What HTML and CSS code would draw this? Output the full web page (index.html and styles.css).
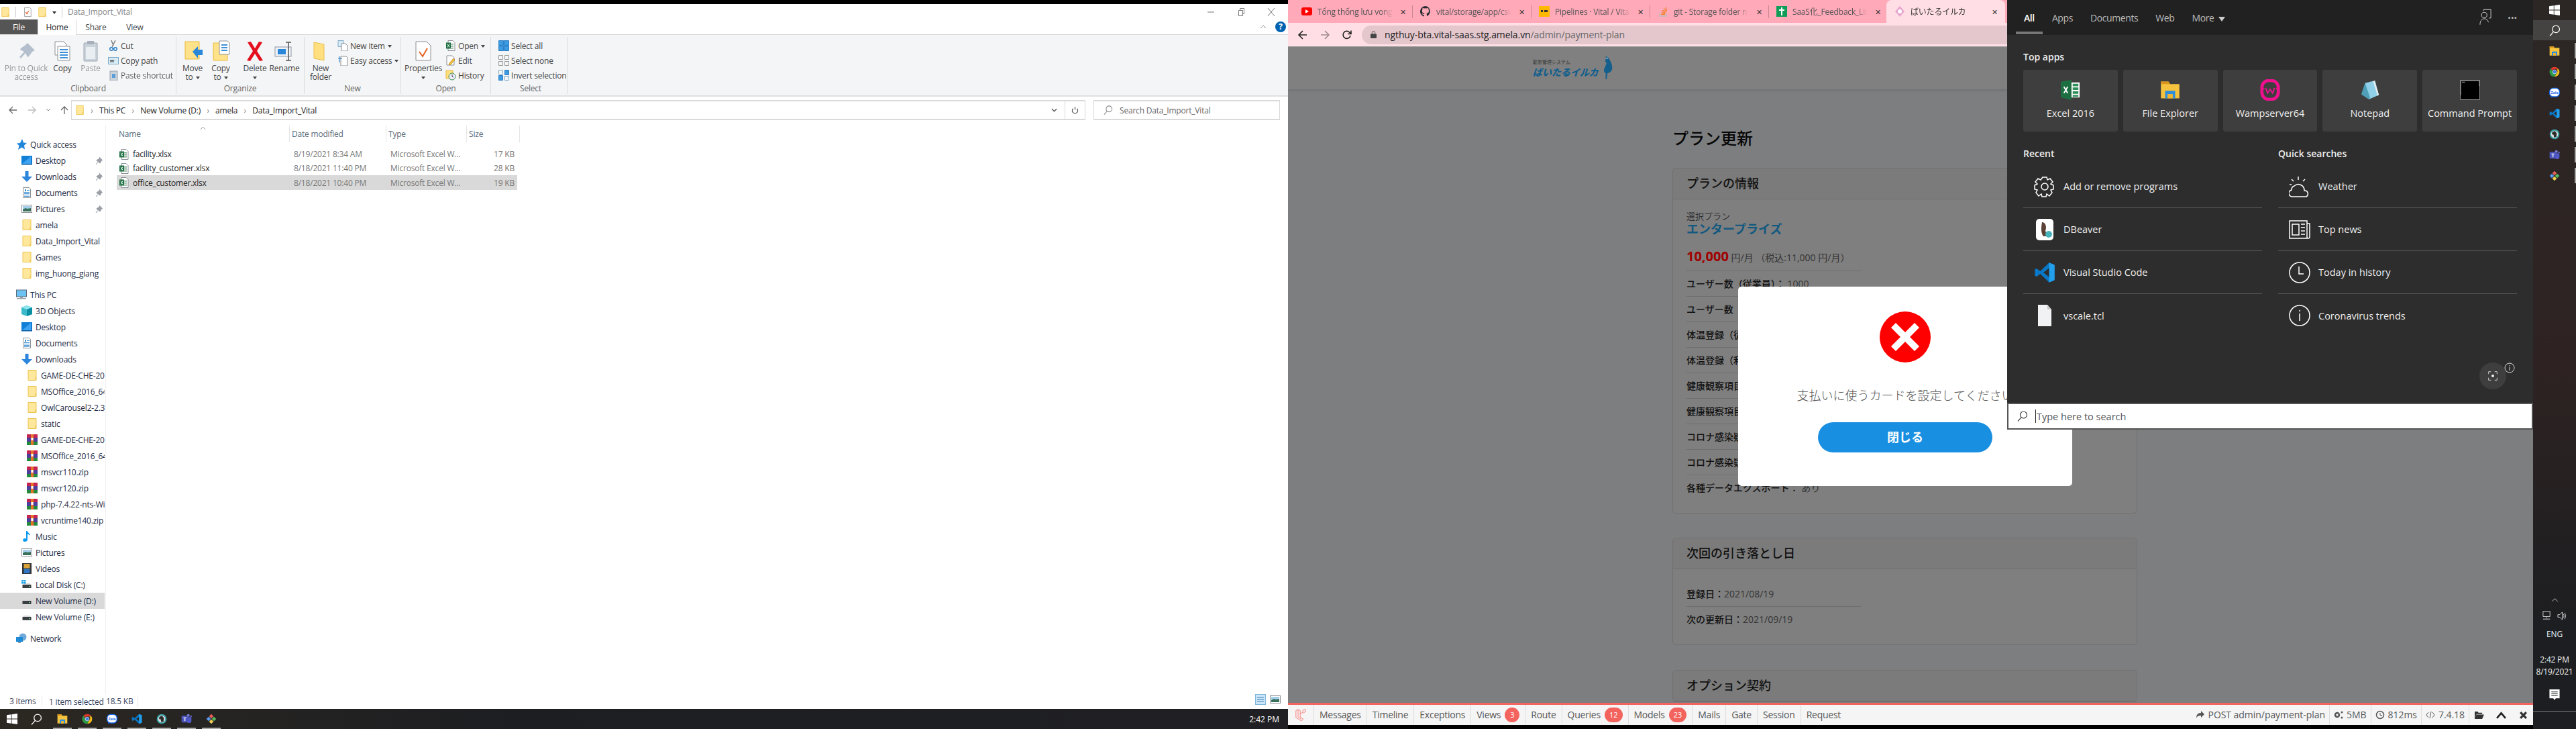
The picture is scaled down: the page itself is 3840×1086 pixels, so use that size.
FILE: index.html
```html
<!DOCTYPE html>
<html lang="en">
<head>
  <meta charset="UTF-8" />
  <title>Desktop</title>
  <link rel="stylesheet" href="styles.css">
</head>
<body>

<svg class="defs" width="0" height="0">
  <defs>
    <symbol id="folder" viewBox="0 0 16 16"><path d="M2 .5h12v15H2z" fill="#ffe89c" stroke="#eec24f"/><path d="M12 15.5v-4h2v4z" fill="#f3cc5c"/></symbol>
    <symbol id="xlsx" viewBox="0 0 16 16"><path d="M4 .5h7l3 3v12H4z" fill="#fff" stroke="#8a8f94"/><path d="M8 5h4v1.5H8zM8 8h4v1.5H8zM8 11h4v1.5H8z" fill="#6c9b7d"/><rect x="1" y="3.5" width="7" height="9" fill="#1d6f42"/><path d="M3 5.5l3 5M6 5.5l-3 5" stroke="#fff"/></symbol>
    <symbol id="rar" viewBox="0 0 16 16"><rect y="0" width="16" height="5" fill="#c4244f"/><rect y="5" width="16" height="6" fill="#4d3f9d"/><rect y="11" width="16" height="5" fill="#23893c"/><rect x="6" width="4" height="16" fill="#e8742a"/><rect x="6.5" y="5" width="3" height="4" fill="#fff"/></symbol>
    <symbol id="pin" viewBox="0 0 16 16"><path d="M9 1l6 6-2 1-2 4-1.500 1L7 10l-4 5-1-1 4-4-3-2.500L4 6l4-2z" fill="#9aa0a6"/></symbol>
    <symbol id="star" viewBox="0 0 16 16"><path d="M9 0l2 5.500 5 .5-4 3.500 1 6-4.500-3L3 16l1.500-6L1 6.500l5-.5z" fill="#1f86d9"/></symbol>
    <symbol id="desktop" viewBox="0 0 16 16"><rect y="1" width="16" height="13" fill="#0f7fd8"/><path d="M1 13L14 2v11z" fill="#3fa2ef"/><rect y="13" width="16" height="1.500" fill="#0a5da3"/></symbol>
    <symbol id="down" viewBox="0 0 16 16"><path d="M5.500 0h5v8H16l-8 8-8-8h5.500z" fill="#2c86de"/></symbol>
    <symbol id="docs" viewBox="0 0 16 16"><path d="M2.500.5h9l2 2v13h-11z" fill="#fff" stroke="#8b8f94"/><path d="M5 3h2v3H5zM8 4h4v1H8zM4 7h8v1H4zM4 9h8v1H4zM4 11h8v1H4zM4 13h8v1H4z" fill="#3d8fd4"/></symbol>
    <symbol id="pics" viewBox="0 0 16 16"><rect x=".5" y="2.500" width="15" height="11" fill="#fff" stroke="#8b8f94"/><rect x="2" y="4" width="12" height="8" fill="#a4d0ee"/><path d="M2 9l4-2 3 1 5-1v5H2z" fill="#38705a"/></symbol>
    <symbol id="pc" viewBox="0 0 16 16"><rect x=".5" y="1" width="15" height="10" fill="#6cc3f3" stroke="#5a6a78"/><rect x="6" y="11" width="4" height="2" fill="#9aa2a8"/><rect x="1" y="13" width="14" height="1.500" fill="#9aa2a8"/></symbol>
    <symbol id="cube" viewBox="0 0 16 16"><path d="M8 0l8 3v10l-8 3-8-3V3z" fill="#39b9c9"/><path d="M8 6L0 3l8-3 8 3z" fill="#8fe4ee"/><path d="M8 6v10l8-3V3z" fill="#0c8ea3"/></symbol>
    <symbol id="music" viewBox="0 0 16 16"><path d="M7 0h2c0 3 4 3.500 4 7-1-1.500-2.500-2-4-2v8c0 2-2 3-4 3s-3-1-3-2.200S3.500 11 5 11c.8 0 1.500.2 2 .5z" fill="#0d9af0"/></symbol>
    <symbol id="video" viewBox="0 0 16 16"><rect x="1" width="14" height="16" fill="#333"/><rect x="3.500" y="1" width="9" height="6.500" fill="#d9a13a"/><rect x="3.500" y="8.500" width="9" height="6.500" fill="#2f77c4"/></symbol>
    <symbol id="disk" viewBox="0 0 16 16"><path d="M2 8l1-2h10l1 2z" fill="#d6d8da"/><rect x="1.500" y="8" width="13" height="5" fill="#3a3f44"/><rect x="11" y="10" width="1.500" height="1.500" fill="#6fe06f"/></symbol>
    <symbol id="diskc" viewBox="0 0 16 16"><use href="#disk"/><path d="M0 1h3v2.500H0zM3.500 1h3v2.500h-3zM0 4h3v2.500H0zM3.500 4h3v2.500h-3z" fill="#1aa3e8"/></symbol>
    <symbol id="net" viewBox="0 0 16 16"><circle cx="10" cy="6" r="5.500" fill="#6fa9d9"/><rect y="6" width="10" height="7" fill="#1c8ad6"/><rect x="3" y="13" width="4" height="2" fill="#8a9aa6"/></symbol>
    <symbol id="win" viewBox="0 0 16 16"><path d="M0 2.300l6.800-1v6.300H0zM7.600 1.200L16 0v7.600H7.600zM0 8.400h6.800v6.300l-6.800-1zM7.600 8.400H16V16l-8.400-1.200z" fill="#fff"/></symbol>
    <symbol id="lens" viewBox="0 0 16 16"><circle cx="9.500" cy="6" r="5" fill="none" stroke="currentColor" stroke-width="1.200"/><path d="M6 9.800L1 15.500" stroke="currentColor" stroke-width="1.200"/></symbol>
    <symbol id="explorer" viewBox="0 0 24 24"><path d="M1 2h9l2 3h11v17H1z" fill="#f5c33e"/><path d="M1 2h9l2 3H1z" fill="#d9951e"/><path d="M6 13h12v9h-3v-5H9v5H6z" fill="#2f8fdc"/><rect x="9" y="17" width="6" height="5" fill="#f2b632"/></symbol>
    <symbol id="chrome" viewBox="0 0 24 24"><path d="M12 1a11 11 0 0 1 9.500 5.500H12A5.500 5.500 0 0 0 7 9.700L3.700 4.500A11 11 0 0 1 12 1z" fill="#d93a2c"/><path d="M21.500 6.500A11 11 0 0 1 12 23l4.700-8.200a5.500 5.500 0 0 0 .1-8.300z" fill="#f2bd1d"/><path d="M12 23A11 11 0 0 1 3.700 4.500L7.700 12a5.500 5.500 0 0 0 9 2.800z" fill="#2e9a47"/><circle cx="12" cy="12" r="4.300" fill="#3f7ee0" stroke="#fff"/></symbol>
    <symbol id="zalo" viewBox="0 0 24 24"><rect x="1" y="2" width="22" height="19" rx="8" fill="#fff" stroke="#1667f0" stroke-width="2"/><path d="M4 20l-1 3 5-2z" fill="#1667f0"/><text x="12" y="14.500" font-size="8" font-weight="700" font-family="Open Sans" text-anchor="middle" fill="#1667f0">Zalo</text></symbol>
    <symbol id="vscode" viewBox="0 0 24 24"><path d="M17 1L7 10.500 3 7.500 1 8.500v7l2 1 4-3L17 23l6-2.500v-17zM17 7v10l-6.500-5z" fill="#0a78c8" fill-rule="evenodd"/><path d="M17 1l6 2.500v17L17 23V17V7z" fill="#22a0ec"/></symbol>
    <symbol id="roundapp" viewBox="0 0 24 24"><circle cx="12" cy="12" r="11" fill="#3aa3a8"/><circle cx="12" cy="12" r="8" fill="#ddd"/><path d="M7 7l6-2 4 5-1 8-5 1-1-6-4-1z" fill="#2d2d2d"/></symbol>
    <symbol id="teams" viewBox="0 0 24 24"><circle cx="16" cy="4" r="3" fill="#7b83d6"/><circle cx="22" cy="6" r="2" fill="#5f67bc"/><path d="M13 8h10v8a5 5 0 0 1-5 5h-2a5 5 0 0 1-3-2z" fill="#5059c9"/><rect x="1" y="5" width="15" height="15" rx="1.500" fill="#4b53bc"/><path d="M5 8.500h7v1.800H9.500V17h-2v-6.700H5z" fill="#fff"/></symbol>
    <symbol id="kraken" viewBox="0 0 24 24"><path d="M12 1l5 5-5 5-5-5z" fill="#e8605a"/><path d="M6 7l5 5-5 5-5-5z" fill="#5b9bf0"/><path d="M18 7l5 5-5 5-5-5z" fill="#57b85d"/><path d="M12 13l5 5-5 5-5-5z" fill="#f2cf52"/></symbol>
    <symbol id="excel" viewBox="0 0 32 32"><path d="M1 3l17-3v32L1 28z" fill="#1d6f42"/><path d="M18 4h13v24H18z" fill="#fff"/><path d="M20 6h9v4h-9zM20 12h9v4h-9zM20 18h9v4h-9zM20 24h9v3h-9z" fill="#2f8f5b"/><path d="M6 11l6 10M12 11L6 21" stroke="#fff" stroke-width="2"/></symbol>
  </defs>
</svg>

<div class="desktop">

  <!-- explorer window -->
  <section class="explorer">
    <div class="titlebar">
      <div class="qa">
        <svg class="qa-ico"><use href="#folder"/></svg>
        <i class="qa-sep"></i>
        <svg class="qa-ico" viewBox="0 0 16 16"><path d="M3 .5h9l2 2v13H3z" fill="#fff" stroke="#999"/><path d="M5 8l2 3 3-5" fill="none" stroke="#e65a1e" stroke-width="1.500"/></svg>
        <svg class="qa-ico"><use href="#folder"/></svg>
        <span class="qa-drop"></span>
        <i class="qa-sep"></i>
        <span class="qa-title">Data_Import_Vital</span>
      </div>
      <div class="wincontrols">
        <svg viewBox="0 0 12 12"><path d="M1 6h10" stroke="#777"/></svg>
        <svg viewBox="0 0 12 12"><path d="M2.500 3.500h6v8h-6zM4.500 3.500V.5h6v8h-2" fill="none" stroke="#777"/></svg>
        <svg viewBox="0 0 12 12"><path d="M1 0l10 12M11 0L1 12" stroke="#777"/></svg>
      </div>
    </div>

    <div class="tabs">
      <span class="tab-file">File</span>
      <span class="tab-home">Home</span>
      <span class="tab-other tab-share">Share</span>
      <span class="tab-other">View</span>
      <span class="tabs-end">
        <svg class="collapse" viewBox="0 0 10 6"><path d="M1 5l4-4 4 4" fill="none" stroke="#888"/></svg>
        <span class="help">?</span>
      </span>
    </div>

    <div class="ribbon">
      <div class="group g-clip">
        <div class="tools">
          <div class="big w70 dim">
            <svg class="big-ico" viewBox="0 0 32 32"><path d="M18 4l11 11-4 2-5 7-2 1-3-6-7 8-2-2 7-8-6-3 1-2 7-5z" fill="#a9b6c6"/></svg>
            <span>Pin to Quick<br>access</span>
          </div>
          <div class="big w38">
            <svg class="big-ico" viewBox="0 0 32 32"><path d="M5 2h13l4 4v16H5z" fill="#fff" stroke="#8b8f94"/><path d="M9 9h18v21H9z" fill="#fff" stroke="#8b8f94"/><path d="M12 13h12v2H12zM12 17h12v2H12zM12 21h12v2H12zM12 25h12v2H12z" fill="#3e8fd6"/></svg>
            <span>Copy</span>
          </div>
          <div class="big w46 dim">
            <svg class="big-ico" viewBox="0 0 32 32"><rect x="6" y="4" width="20" height="27" rx="1" fill="#c3ccd6" stroke="#8b96a3"/><rect x="11" y="1" width="10" height="5" fill="#9aa4b0"/><path d="M9 10h14v18H9z" fill="#e8edf2"/></svg>
            <span>Paste</span>
          </div>
          <div class="smalls">
            <div class="small"><svg viewBox="0 0 16 16"><path d="M5 0l3 8M11 0L6 10" stroke="#777" stroke-width="1.300"/><circle cx="5" cy="13" r="2.300" fill="none" stroke="#2a7fc9" stroke-width="1.500"/><circle cx="11" cy="13" r="2.300" fill="none" stroke="#2a7fc9" stroke-width="1.500"/></svg><span>Cut</span></div>
            <div class="small"><svg viewBox="0 0 16 16"><rect x=".5" y="3.500" width="15" height="10" fill="#d8ecf8" stroke="#7fa9c6"/><path d="M3 7l1.500 4L6 7l1.500 4L9 7" fill="none" stroke="#444"/></svg><span>Copy path</span></div>
            <div class="small dim"><svg viewBox="0 0 16 16"><rect x="3" y="2" width="11" height="14" fill="#c3ccd6" stroke="#8b96a3"/><path d="M6 6h5v6H6z" fill="#3e8fd6"/></svg><span>Paste shortcut</span></div>
          </div>
        </div>
        <div class="group-name">Clipboard</div>
      </div>

      <div class="group g-org">
        <div class="tools">
          <div class="big w42">
            <svg class="big-ico" viewBox="0 0 32 32"><path d="M5 2h21v26H5z" fill="#ffe28a" stroke="#e8b93c"/><path d="M16 17l8-8v5h7v8h-7v5z" fill="#2a86d9"/></svg>
            <span>Move<br>to<i class="caret"></i></span>
          </div>
          <div class="big w42">
            <svg class="big-ico" viewBox="0 0 32 32"><path d="M5 4h21v26H5z" fill="#ffe28a" stroke="#e8b93c"/><path d="M14 1h12l3 3v17H14z" fill="#fff" stroke="#8b8f94"/><path d="M17 6h9v2h-9zM17 10h9v2h-9zM17 14h9v2h-9z" fill="#3e8fd6"/></svg>
            <span>Copy<br>to<i class="caret"></i></span>
          </div>
          <i class="tool-sep"></i>
          <div class="big w44">
            <svg class="big-ico" viewBox="0 0 32 32"><path d="M5 3l5-1 6 10 6-10 5 1-8 13 9 14-5 1-7-11-7 11-5-1 9-14z" fill="#e5101f"/></svg>
            <span>Delete<br><i class="caret solo"></i></span>
          </div>
          <div class="big w44">
            <svg class="big-ico" viewBox="0 0 32 32"><rect x="2" y="10" width="24" height="14" fill="#eef3f8" stroke="#8b96a3"/><rect x="6" y="13" width="12" height="8" fill="#2a86d9"/><path d="M18 3h8M18 30h8M22 3v27" stroke="#555" stroke-width="1.500"/></svg>
            <span>Rename</span>
          </div>
        </div>
        <div class="group-name">Organize</div>
      </div>

      <div class="group g-new">
        <div class="tools">
          <div class="big w42">
            <svg class="big-ico" viewBox="0 0 32 32"><path d="M6 3l15 3v24L6 27z" fill="#ffdf80" stroke="#ecc04f"/></svg>
            <span>New<br>folder</span>
          </div>
          <div class="smalls wide-icon">
            <div class="small"><svg viewBox="0 0 16 16"><path d="M1 .5h8v9H1z" fill="#d8ecf8" stroke="#7fa9c6"/><path d="M6 5h6l3 3v8H6z" fill="#fff" stroke="#8b8f94"/></svg><span>New item<i class="caret"></i></span></div>
            <div class="small"><svg viewBox="0 0 16 16"><path d="M5 2h8l2 2v12H5z" fill="#fff" stroke="#8b8f94"/><path d="M1 5h6M3 2v9" stroke="#2a7fc9"/></svg><span>Easy access<i class="caret"></i></span></div>
          </div>
        </div>
        <div class="group-name">New</div>
      </div>

      <div class="group g-open">
        <div class="tools">
          <div class="big w60">
            <svg class="big-ico" viewBox="0 0 32 32"><path d="M5 2h16l6 6v22H5z" fill="#fff" stroke="#8b8f94"/><path d="M10 17l5 7 7-12" fill="none" stroke="#e8601e" stroke-width="2"/></svg>
            <span>Properties<br><i class="caret solo"></i></span>
          </div>
          <div class="smalls">
            <div class="small"><svg viewBox="0 0 16 16"><use href="#xlsx"/></svg><span>Open<i class="caret"></i></span></div>
            <div class="small"><svg viewBox="0 0 16 16"><path d="M2 1h8l3 3v11H2z" fill="#fff" stroke="#8b8f94"/><path d="M12 5l2 2-6 7-3 1 1-3z" fill="#f2c33e" stroke="#c8962a"/></svg><span>Edit</span></div>
            <div class="small"><svg viewBox="0 0 16 16"><path d="M1 1h10v12H1z" fill="#ffdf80" stroke="#e8b93c"/><circle cx="10" cy="10" r="5" fill="#eef" stroke="#3c8a4a"/><path d="M10 7v3l2 1" stroke="#333" fill="none"/></svg><span>History</span></div>
          </div>
        </div>
        <div class="group-name">Open</div>
      </div>

      <div class="group g-select">
        <div class="tools">
          <div class="smalls">
            <div class="small"><svg viewBox="0 0 16 16"><path d="M.5.5h7v7h-7zM8.500.5h7v7h-7zM.5 8.500h7v7h-7zM8.500 8.500h7v7h-7z" fill="#3e9be0" stroke="#2a7fc9"/></svg><span>Select all</span></div>
            <div class="small"><svg viewBox="0 0 16 16"><path d="M.5.5h6v6h-6zM9.500.5h6v6h-6zM.5 9.500h6v6h-6zM9.500 9.500h6v6h-6z" fill="none" stroke="#999"/></svg><span>Select none</span></div>
            <div class="small"><svg viewBox="0 0 16 16"><path d="M9.500.5h6v7h-6zM.5 8.500h6v7h-6z" fill="#3e9be0" stroke="#2a7fc9"/><path d="M.5.5h6v6h-6zM9.500 9.500h6v6h-6z" fill="none" stroke="#7fa9c6"/></svg><span>Invert selection</span></div>
          </div>
        </div>
        <div class="group-name">Select</div>
      </div>
    </div>

    <div class="addressrow">
      <div class="navbtns">
        <svg viewBox="0 0 14 14"><path d="M13 7H2M7 2L2 7l5 5" fill="none" stroke="#666" stroke-width="1.300"/></svg>
        <svg viewBox="0 0 14 14"><path d="M1 7h11M7 2l5 5-5 5" fill="none" stroke="#bbb" stroke-width="1.300"/></svg>
        <svg class="nav-small" viewBox="0 0 8 6"><path d="M1 1l3 3 3-3" fill="none" stroke="#888"/></svg>
        <svg viewBox="0 0 14 14"><path d="M7 13V2M2 7l5-5 5 5" fill="none" stroke="#666" stroke-width="1.300"/></svg>
      </div>
      <div class="addressbox">
        <svg class="path-ico"><use href="#folder"/></svg>
        <span class="crumb-sep">›</span><span>This PC</span>
        <span class="crumb-sep">›</span><span>New Volume (D:)</span>
        <span class="crumb-sep">›</span><span>amela</span>
        <span class="crumb-sep">›</span><span>Data_Import_Vital</span>
        <span class="addr-end">
          <svg class="addr-drop" viewBox="0 0 10 6"><path d="M1 1l4 4 4-4" fill="none" stroke="#555" stroke-width="1.500"/></svg>
          <span class="addr-refresh"><svg viewBox="0 0 12 14"><path d="M3 4a4.500 4.500 0 1 0 6 0M6 1v5" fill="none" stroke="#555" stroke-width="1.300"/></svg></span>
        </span>
      </div>
      <div class="searchbox">
        <svg class="searchbox-ico"><use href="#lens"/></svg>
        <span>Search Data_Import_Vital</span>
      </div>
    </div>

    <div class="explorer-body">
      <nav class="navpane">
        <div class="nav-row l1"><svg><use href="#star"/></svg><span>Quick access</span></div>
        <div class="nav-row l2"><svg><use href="#desktop"/></svg><span>Desktop</span><svg class="pinned"><use href="#pin"/></svg></div>
        <div class="nav-row l2"><svg><use href="#down"/></svg><span>Downloads</span><svg class="pinned"><use href="#pin"/></svg></div>
        <div class="nav-row l2"><svg><use href="#docs"/></svg><span>Documents</span><svg class="pinned"><use href="#pin"/></svg></div>
        <div class="nav-row l2"><svg><use href="#pics"/></svg><span>Pictures</span><svg class="pinned"><use href="#pin"/></svg></div>
        <div class="nav-row l2"><svg><use href="#folder"/></svg><span>amela</span></div>
        <div class="nav-row l2"><svg><use href="#folder"/></svg><span>Data_Import_Vital</span></div>
        <div class="nav-row l2"><svg><use href="#folder"/></svg><span>Games</span></div>
        <div class="nav-row l2"><svg><use href="#folder"/></svg><span>img_huong_giang</span></div>

        <div class="nav-row l1 section"><svg><use href="#pc"/></svg><span>This PC</span></div>
        <div class="nav-row l2"><svg><use href="#cube"/></svg><span>3D Objects</span></div>
        <div class="nav-row l2"><svg><use href="#desktop"/></svg><span>Desktop</span></div>
        <div class="nav-row l2"><svg><use href="#docs"/></svg><span>Documents</span></div>
        <div class="nav-row l2"><svg><use href="#down"/></svg><span>Downloads</span></div>
        <div class="nav-row l3"><svg><use href="#folder"/></svg><span>GAME-DE-CHE-20</span></div>
        <div class="nav-row l3"><svg><use href="#folder"/></svg><span>MSOffice_2016_64</span></div>
        <div class="nav-row l3"><svg><use href="#folder"/></svg><span>OwlCarousel2-2.3.</span></div>
        <div class="nav-row l3"><svg><use href="#folder"/></svg><span>static</span></div>
        <div class="nav-row l3"><svg><use href="#rar"/></svg><span>GAME-DE-CHE-20</span></div>
        <div class="nav-row l3"><svg><use href="#rar"/></svg><span>MSOffice_2016_64</span></div>
        <div class="nav-row l3"><svg><use href="#rar"/></svg><span>msvcr110.zip</span></div>
        <div class="nav-row l3"><svg><use href="#rar"/></svg><span>msvcr120.zip</span></div>
        <div class="nav-row l3"><svg><use href="#rar"/></svg><span>php-7.4.22-nts-Wi</span></div>
        <div class="nav-row l3"><svg><use href="#rar"/></svg><span>vcruntime140.zip</span></div>
        <div class="nav-row l2"><svg><use href="#music"/></svg><span>Music</span></div>
        <div class="nav-row l2"><svg><use href="#pics"/></svg><span>Pictures</span></div>
        <div class="nav-row l2"><svg><use href="#video"/></svg><span>Videos</span></div>
        <div class="nav-row l2"><svg><use href="#diskc"/></svg><span>Local Disk (C:)</span></div>
        <div class="nav-row l2 selected"><svg><use href="#disk"/></svg><span>New Volume (D:)</span></div>
        <div class="nav-row l2"><svg><use href="#disk"/></svg><span>New Volume (E:)</span></div>

        <div class="nav-row l1 section"><svg><use href="#net"/></svg><span>Network</span></div>
      </nav>

      <div class="filepane">
        <div class="file-head">
          <span class="col-name">Name<svg class="sort" viewBox="0 0 10 6"><path d="M1 5l4-4 4 4" fill="none" stroke="#888"/></svg></span>
          <span>Date modified</span>
          <span>Type</span>
          <span>Size</span>
        </div>
        <div class="file-row"><span class="col-name"><svg><use href="#xlsx"/></svg><b>facility.xlsx</b></span><span>8/19/2021 8:34 AM</span><span>Microsoft Excel W...</span><span class="size">17 KB</span></div>
        <div class="file-row"><span class="col-name"><svg><use href="#xlsx"/></svg><b>facility_customer.xlsx</b></span><span>8/18/2021 11:40 PM</span><span>Microsoft Excel W...</span><span class="size">28 KB</span></div>
        <div class="file-row selected"><span class="col-name"><svg><use href="#xlsx"/></svg><b>office_customer.xlsx</b></span><span>8/18/2021 10:40 PM</span><span>Microsoft Excel W...</span><span class="size">19 KB</span></div>
      </div>
    </div>

    <div class="statusbar">
      <span class="st-items">3 items</span>
      <span class="st-sel">1 item selected</span>
      <span class="st-size">18.5 KB</span>
      <span class="views">
        <svg viewBox="0 0 16 16"><rect x=".5" y=".5" width="15" height="15" fill="#cde6f7" stroke="#7fb6dc"/><path d="M3 5h10M3 8h10M3 11h10" stroke="#357fb8"/></svg>
        <svg viewBox="0 0 16 16"><use href="#pics"/></svg>
      </span>
    </div>
  </section>

  <!-- left taskbar -->
  <footer class="taskbar">
    <span class="task-start"><svg><use href="#win"/></svg></span>
    <span class="task-search"><svg class="task-lens"><use href="#lens"/></svg></span>
    <span class="task-app first"><svg><use href="#explorer"/></svg></span>
    <span class="task-app"><svg><use href="#chrome"/></svg></span>
    <span class="task-app"><svg><use href="#zalo"/></svg></span>
    <span class="task-app"><svg><use href="#vscode"/></svg></span>
    <span class="task-app"><svg><use href="#roundapp"/></svg></span>
    <span class="task-app"><svg><use href="#teams"/></svg></span>
    <span class="task-app"><svg><use href="#kraken"/></svg></span>
    <span class="task-time">2:42 PM</span>
  </footer>

  <!-- browser -->
  <section class="browser">
    <div class="chrome-tabs">
      <div class="ctab sep"><svg class="fav" viewBox="0 0 16 16"><rect y="2" width="16" height="12" rx="3" fill="#f00"/><path d="M6 5l5 3-5 3z" fill="#fff"/></svg><span class="ctab-title">Tổng thống lưu vong</span><span class="ctab-x">✕</span></div>
      <div class="ctab sep"><svg class="fav" viewBox="0 0 16 16"><path d="M8 0a8 8 0 0 0-2.500 15.600c.4 0 .5-.2.500-.4v-2c-2.200.5-2.700-1-2.700-1-.4-.9-.9-1.200-.9-1.200-.7-.5.100-.5.100-.5.800.1 1.200.8 1.200.8.700 1.200 1.900.9 2.300.7.100-.5.300-.9.500-1.100-1.800-.2-3.700-.9-3.700-4 0-.9.300-1.600.8-2.100-.1-.2-.4-1 .1-2.100 0 0 .7-.2 2.200.8a7.600 7.600 0 0 1 4 0c1.500-1 2.200-.8 2.200-.8.400 1.100.2 1.900.1 2.100.5.600.8 1.300.8 2.100 0 3.100-1.900 3.700-3.700 3.900.3.300.6.800.6 1.500v2.200c0 .2.100.5.600.4A8 8 0 0 0 8 0z" fill="#24292e"/></svg><span class="ctab-title">vital/storage/app/csv</span><span class="ctab-x">✕</span></div>
      <div class="ctab sep"><svg class="fav" viewBox="0 0 16 16"><rect width="16" height="16" fill="#ffb800"/><rect x="3" y="6" width="3" height="3" fill="#333"/><rect x="8" y="6" width="5" height="3" fill="#333"/></svg><span class="ctab-title">Pipelines · Vital / Vita</span><span class="ctab-x">✕</span></div>
      <div class="ctab sep"><svg class="fav" viewBox="0 0 16 16"><path d="M3 10v5h10v-5" fill="none" stroke="#bcbbbb" stroke-width="1.500"/><path d="M5 12.500h6M5.300 10.500l5.800.6M6 8.500l5.500 1.500M7.300 6l4.700 3M9.500 3.500l3.300 4.500M12 1.500l1.500 5.500" stroke="#f48024" stroke-width="1.200"/></svg><span class="ctab-title">git - Storage folder n</span><span class="ctab-x">✕</span></div>
      <div class="ctab"><svg class="fav" viewBox="0 0 16 16"><rect width="16" height="16" fill="#0f9d58"/><path d="M7 2h2v3h3v2H9v7H7V7H4V5h3z" fill="#fff"/></svg><span class="ctab-title">SaaS化_Feedback_Lis</span><span class="ctab-x">✕</span></div>
      <div class="ctab active"><svg class="fav" viewBox="0 0 16 16"><path d="M8 0l7 8-7 8-7-8z" fill="#e8a6d0"/><circle cx="8" cy="8" r="3" fill="#fff"/></svg><span class="ctab-title">ばいたるイルカ</span><span class="ctab-x">✕</span></div>
    </div>
    <div class="chrome-bar">
      <svg class="nav-ico" viewBox="0 0 16 16"><path d="M14 8H3M8 2L2 8l6 6" fill="none" stroke="#222" stroke-width="1.600"/></svg>
      <svg class="nav-ico" viewBox="0 0 16 16"><path d="M2 8h11M8 2l6 6-6 6" fill="none" stroke="#a08a90" stroke-width="1.600"/></svg>
      <svg class="nav-ico" viewBox="0 0 16 16"><path d="M13 9a5.500 5.500 0 1 1-1.500-5L14 6.500M14 1.500v5H9" fill="none" stroke="#222" stroke-width="1.600"/></svg>
      <div class="omnibox">
        <svg class="lock" viewBox="0 0 10 12"><rect y="5" width="10" height="7" rx="1" fill="#444"/><path d="M2.500 5V3a2.500 2.500 0 0 1 5 0v2" fill="none" stroke="#444"/></svg>
        <span class="url">ngthuy-bta.vital-saas.stg.amela.vn<em>/admin/payment-plan</em></span>
      </div>
    </div>

    <div class="webpage">
      <header class="site-head">
        <div class="logo">
          <div class="logo-text"><small>勤怠管理システム</small><strong>ばいたるイルカ</strong></div>
          <svg class="dolphin" viewBox="0 0 32 64"><path d="M14 2c8 4 16 18 16 30 0 8-6 12-12 14l-2 16-3-4 1-12c-4-2-6-6-4-12l6-14c-3-2-5-6-2-10z" fill="#155f8c"/><circle cx="17" cy="8" r="1.500" fill="#fff"/></svg>
        </div>
      </header>

      <main class="content">
        <h1 class="page-title">プラン更新</h1>

        <div class="card card-plan">
          <div class="card-head">プランの情報</div>
          <div class="card-body">
            <div class="plan-label">選択プラン</div>
            <div class="plan-name">エンタープライズ</div>
            <div class="plan-price"><b>10,000</b> 円/月 （税込:11,000 円/月）</div>
            <div class="info-row"><b>ユーザー数（従業員）：</b> 1000</div>
            <div class="info-row"><b>ユーザー数（管理者）：</b> 10</div>
            <div class="info-row"><b>体温登録（従業員）：</b> あり</div>
            <div class="info-row"><b>体温登録（利用者）：</b> あり</div>
            <div class="info-row"><b>健康観察項目（従業員）：</b> あり</div>
            <div class="info-row"><b>健康観察項目（利用者）：</b> あり</div>
            <div class="info-row"><b>コロナ感染疑い（従業員）：</b> あり</div>
            <div class="info-row"><b>コロナ感染疑い（利用者）：</b> あり</div>
            <div class="info-row last"><b>各種データエクスポート：</b> あり</div>
          </div>
        </div>

        <div class="card card-date">
          <div class="card-head">次回の引き落とし日</div>
          <div class="card-body">
            <div class="info-row"><b>登録日：</b>2021/08/19</div>
            <div class="info-row last"><b>次の更新日：</b>2021/09/19</div>
          </div>
        </div>

        <div class="card">
          <div class="card-head">オプション契約</div>
        </div>
      </main>

      <div class="modal">
        <svg class="modal-ico" viewBox="0 0 76 76"><circle cx="38" cy="38" r="38" fill="#f00"/><path d="M24 17l14 14 14-14 7 7-14 14 14 14-7 7-14-14-14 14-7-7 14-14-14-14z" fill="#fff"/></svg>
        <p class="modal-text">支払いに使うカードを設定してください</p>
        <span class="modal-btn">閉じる</span>
      </div>
    </div>

    <div class="debugbar">
      <span class="db-logo"><svg viewBox="0 0 20 24"><path d="M1 4l4-2 4 2v12l6 4-4 3-10-6zM9 10l5-3V3l4-2 1 5-5 3M5 2v14l6 4" fill="none" stroke="#f9665e"/></svg></span>
      <span class="db-item">Messages</span>
      <span class="db-item">Timeline</span>
      <span class="db-item">Exceptions</span>
      <span class="db-item">Views<i class="db-badge">3</i></span>
      <span class="db-item">Route</span>
      <span class="db-item">Queries<i class="db-badge">12</i></span>
      <span class="db-item">Models<i class="db-badge">23</i></span>
      <span class="db-item">Mails</span>
      <span class="db-item">Gate</span>
      <span class="db-item">Session</span>
      <span class="db-item no-line">Request</span>
      <span class="db-right">
        <span class="db-meta"><svg viewBox="0 0 14 14"><path d="M13 6L8 1v3C3 4 1 7 1 12c1-3 3-4 7-4v3z" fill="#555"/></svg>POST admin/payment-plan</span>
        <span class="db-meta"><svg viewBox="0 0 14 14"><circle cx="5" cy="7" r="3" fill="none" stroke="#555" stroke-width="2.500"/><circle cx="12" cy="3" r="1.500" fill="#555"/><circle cx="12" cy="11" r="1.500" fill="#555"/></svg>5MB</span>
        <span class="db-meta"><svg viewBox="0 0 14 14"><circle cx="7" cy="7" r="5.500" fill="none" stroke="#555" stroke-width="1.500"/><path d="M7 4v3.500H10" fill="none" stroke="#555"/></svg>812ms</span>
        <span class="db-meta"><svg viewBox="0 0 14 14"><path d="M4 3L1 7l3 4M10 3l3 4-3 4M8 2L6 12" fill="none" stroke="#555"/></svg>7.4.18</span>
        <span class="db-tools">
          <svg viewBox="0 0 16 14"><path d="M1 1h5l1 2h6v2H4L1 13zM4 6h12l-3 7H1z" fill="#333"/></svg>
          <svg viewBox="0 0 14 10"><path d="M1 9l6-7 6 7" fill="none" stroke="#222" stroke-width="2.500"/></svg>
          <svg viewBox="0 0 12 12"><path d="M2 2l8 8M10 2l-8 8" stroke="#333" stroke-width="3"/></svg>
        </span>
      </span>
    </div>
  </section>

  <!-- windows search panel -->
  <aside class="search-panel">
    <div class="sp-tabs">
      <span class="sp-tab on">All</span>
      <span class="sp-tab">Apps</span>
      <span class="sp-tab">Documents</span>
      <span class="sp-tab">Web</span>
      <span class="sp-tab">More <i class="tri"></i></span>
      <span class="sp-tools">
        <svg viewBox="0 0 20 28"><circle cx="8" cy="10" r="4.500" fill="none" stroke="#ddd"/><path d="M1 26c0-6 3-10 7-10s6 3 7 6M7 3V1h12v14h-3" fill="none" stroke="#ddd"/></svg>
        <span class="sp-dots">···</span>
      </span>
    </div>
    <div class="sp-body">
      <h3 class="sp-head">Top apps</h3>
      <div class="sp-tiles">
        <div class="tile"><svg class="tile-ico"><use href="#excel"/></svg><span>Excel 2016</span></div>
        <div class="tile"><svg class="tile-ico"><use href="#explorer"/></svg><span>File Explorer</span></div>
        <div class="tile"><svg class="tile-ico" viewBox="0 0 32 32"><rect x="3" y="1" width="26" height="30" rx="11" fill="none" stroke="#f0108f" stroke-width="5"/><path d="M9 13l3 8 4-6 4 6 3-8" fill="none" stroke="#f0108f" stroke-width="2"/><path d="M1 14h6M25 14h6" stroke="#f0108f" stroke-width="2"/></svg><span>Wampserver64</span></div>
        <div class="tile"><svg class="tile-ico" viewBox="0 0 32 32"><path d="M8 5l16-4 6 23-16 7z" fill="#8fd0e8"/><path d="M23 1l7 23-2 1-7-22z" fill="#eee"/><path d="M2 23l12 8-1-2z" fill="#555"/><path d="M8 5L2 23l12 8 2-3z" fill="#4f9fb8"/></svg><span>Notepad</span></div>
        <div class="tile"><svg class="tile-ico" viewBox="0 0 32 32"><rect x="1" y="1" width="30" height="30" fill="#000" stroke="#ddd"/><path d="M1 24c10 0 16-5 16-14h14v21H1z" fill="#000"/><path d="M3 3h5v1H3z" fill="#bbb"/></svg><span>Command Prompt</span></div>
      </div>

      <div class="sp-cols">
        <div class="sp-col">
          <h3 class="sp-head">Recent</h3>
          <div class="sp-row"><svg class="sp-ico" viewBox="0 0 32 32"><circle cx="16" cy="16" r="5" fill="none" stroke="#fff" stroke-width="1.500"/><path d="M13 2h6l1 4 4-2 4 5-3 3 4 2v6l-4 1 2 4-4 5-4-3-1 4h-6l-1-4-4 3-4-5 2-4-4-1v-6l4-2-3-3 4-5 4 2z" fill="none" stroke="#fff" stroke-width="1.500"/></svg><span>Add or remove programs</span></div>
          <div class="sp-row"><svg class="sp-ico" viewBox="0 0 32 32"><rect x="3" y="0" width="26" height="32" rx="5" fill="#fff"/><path d="M12 5c6 0 7 8 5 13l4 8h-7c-3-5-4-9-2-21z" fill="#5b4036"/><circle cx="22" cy="23" r="5" fill="#46b3bd"/></svg><span>DBeaver</span></div>
          <div class="sp-row"><svg class="sp-ico"><use href="#vscode"/></svg><span>Visual Studio Code</span></div>
          <div class="sp-row last"><svg class="sp-ico" viewBox="0 0 32 32"><path d="M6 0h14l6 7v25H6z" fill="#f1f2f4"/><path d="M20 0v7h6z" fill="#c9c9c9"/></svg><span>vscale.tcl</span></div>
        </div>
        <div class="sp-col">
          <h3 class="sp-head">Quick searches</h3>
          <div class="sp-row qs"><svg class="sp-ico" viewBox="0 0 32 32"><path d="M8 15a9 9 0 0 1 15 7h2a5 5 0 0 1 1 9H6a5 5 0 0 1-2-10 6 6 0 0 1 4-6zM14 1v5M4 5l3 3M24 5l-3 3M1 13h3" fill="none" stroke="#fff" stroke-width="1.500"/></svg><span>Weather</span></div>
          <div class="sp-row qs"><svg class="sp-ico" viewBox="0 0 32 32"><path d="M1 3h26v26H1zM27 7h4v20a2 2 0 0 1-4 0" fill="none" stroke="#fff" stroke-width="1.500"/><path d="M5 8h10v16H5zM18 8h6M18 13h6M18 18h6M18 23h6" fill="none" stroke="#fff" stroke-width="1.500"/></svg><span>Top news</span></div>
          <div class="sp-row qs"><svg class="sp-ico" viewBox="0 0 32 32"><circle cx="16" cy="16" r="15" fill="none" stroke="#fff" stroke-width="1.500"/><path d="M15 7v11h7" fill="none" stroke="#fff" stroke-width="1.500"/></svg><span>Today in history</span></div>
          <div class="sp-row qs last"><svg class="sp-ico" viewBox="0 0 32 32"><circle cx="16" cy="16" r="15" fill="none" stroke="#fff" stroke-width="1.500"/><path d="M16 13v11M16 8v2" fill="none" stroke="#fff" stroke-width="1.500"/></svg><span>Coronavirus trends</span></div>
        </div>
      </div>

      <span class="lens-btn"><svg viewBox="0 0 20 20"><path d="M3 7V3h4M13 3h4v4M17 13v4h-4M7 17H3v-4" fill="none" stroke="#ddd"/><circle cx="10" cy="10" r="2.300" fill="#eee"/></svg></span>
      <svg class="lens-info" viewBox="0 0 16 16"><circle cx="8" cy="8" r="7" fill="none" stroke="#ddd"/><path d="M8 7v5M8 4v1.500" stroke="#ddd"/></svg>
    </div>
    <div class="sp-input">
      <svg class="sp-input-ico"><use href="#lens"/></svg>
      <i class="sp-caret"></i><span>Type here to search</span>
    </div>
  </aside>

  <!-- right taskbar -->
  <aside class="sidebar">
    <span class="side-start"><svg><use href="#win"/></svg></span>
    <span class="side-search"><svg><use href="#lens"/></svg></span>
    <span class="side-app"><svg><use href="#explorer"/></svg></span>
    <span class="side-app"><svg><use href="#chrome"/></svg></span>
    <span class="side-app"><svg><use href="#zalo"/></svg></span>
    <span class="side-app"><svg><use href="#vscode"/></svg></span>
    <span class="side-app"><svg><use href="#roundapp"/></svg></span>
    <span class="side-app"><svg><use href="#teams"/></svg></span>
    <span class="side-app"><svg><use href="#kraken"/></svg></span>
    <div class="tray">
      <svg class="tray-caret" viewBox="0 0 12 8"><path d="M1 7l5-5 5 5" fill="none" stroke="#ddd"/></svg>
      <div class="tray-ico">
        <svg viewBox="0 0 16 16"><path d="M2 1h11v8H2zM7 9v3M2 13h11" fill="none" stroke="#ddd"/></svg>
        <svg viewBox="0 0 16 16"><path d="M1 6h3l4-4v12l-4-4H1zM10 5q2 3 0 6M12 3q3 5 0 10" fill="none" stroke="#ddd"/></svg>
      </div>
      <div class="tray-lang">ENG</div>
      <div class="tray-time">2:42 PM</div>
      <div class="tray-date">8/19/2021</div>
      <svg class="tray-note" viewBox="0 0 16 18"><path d="M0 0h16v14H10l-2 3-2-3H0z" fill="#fff"/><path d="M3 4h10M3 7h10M3 10h10" stroke="#222"/></svg>
      <i class="tray-line"></i>
    </div>
  </aside>

</div>

</body>
</html>
```
FILE: styles.css
```css
* { box-sizing: border-box; }
html, body { margin: 0; padding: 0; background: #000; }
body { font-family: "Open Sans", "Noto Sans CJK JP", sans-serif; font-size: 12px; color: #222; overflow: hidden; }
svg { display: block; flex: none; }
.defs { position: absolute; }
.desktop { position: relative; width: 3840px; height: 1086px; background: #000; overflow: hidden; }

/* explorer */
.explorer { position: absolute; left: 0; top: 6px; width: 1920px; height: 1050px; background: #fff; display: flex; flex-direction: column; letter-spacing: -.2px; }
.titlebar { height: 23px; display: flex; align-items: center; justify-content: space-between; }
.qa { display: flex; align-items: center; padding-left: 1px; }
.qa-ico { width: 14px; height: 16px; }
.qa-ico + .qa-ico { margin-left: 8px; }
.qa-sep { width: 1px; height: 16px; background: #ccc; margin: 0 10px 0 8px; }
.qa-drop { width: 0; height: 0; border: 3px solid transparent; border-top: 4px solid #333; margin: 5px 0 0 8px; }
.qa-title { color: #888; margin-left: -2px; }
.wincontrols { display: flex; gap: 33px; padding-right: 19px; }
.wincontrols svg { width: 12px; height: 12px; }

.tabs { height: 23px; display: flex; align-items: stretch; border-bottom: 1px solid #d9d9d9; line-height: 23px; }
.tab-file { width: 56px; background: #555; color: #fff; text-align: center; }
.tab-home { width: 58px; text-align: center; border: 1px solid #d9d9d9; border-bottom: 0; background: #fff; height: 23px; border-top: 0; }
.tab-other { width: 58px; text-align: center; color: #444; }
.tabs-end { margin-left: auto; display: flex; align-items: center; gap: 13px; padding-right: 3px; }
.collapse { width: 10px; height: 6px; }
.help { width: 16px; height: 16px; border-radius: 50%; background: #0063b1; color: #fff; font-weight: 700; line-height: 16px; text-align: center; }

.ribbon { height: 92px; background: #f4f5f6; border-bottom: 2px solid #e0e0e0; display: flex; padding-top: 3px; }
.group { display: flex; flex-direction: column; border-right: 1px solid #dcdcdc; height: 85px; padding-left: 3px; }
.g-clip { width: 263px; padding-left: 4px; }
.g-org { width: 191px; }
.g-new { width: 144px; }
.g-open { width: 134px; }
.g-select { width: 114px; padding-left: 8px; }
.tools { display: flex; height: 71px; }
.group-name { text-align: center; color: #666; line-height: 16px; margin-left: -3px; }
.big { display: flex; flex-direction: column; align-items: center; text-align: center; line-height: 13px; color: #444; }
.big-ico { width: 32px; height: 32px; margin: 5px 0 3px; }
.w38 { width: 38px; }
.w42 { width: 42px; }
.w44 { width: 44px; }
.w46 { width: 46px; }
.w60 { width: 60px; }
.w70 { width: 70px; }
.dim { color: #888; opacity: .85; }
.tool-sep { width: 8px; }
.caret { display: inline-block; width: 0; height: 0; border: 3px solid transparent; border-top: 4px solid #444; border-bottom: 0; margin-left: 4px; vertical-align: middle; }
.caret.solo { margin-left: 0; }
.smalls { display: flex; flex-direction: column; padding-top: 2px; }
.small { height: 22px; display: flex; align-items: center; gap: 3px; padding-left: 3px; color: #444; white-space: nowrap; }
.small svg { width: 16px; height: 16px; }
.wide-icon .small { padding-left: 4px; }

.addressrow { height: 42px; padding: 5px 12px 7px 0; display: flex; }
.navbtns { width: 106px; display: flex; align-items: center; padding-left: 12px; gap: 15px; }
.navbtns svg { width: 14px; height: 14px; }
.navbtns .nav-small { width: 8px; height: 6px; margin: 0 -2px; }
.addressbox { width: 1512px; border: 1px solid #d9d9d9; border-bottom-width: 2px; border-top-width: 2px; display: flex; align-items: center; padding-left: 5px; color: #222; }
.path-ico { width: 14px; height: 16px; }
.crumb-sep { color: #888; width: 22px; text-align: center; }
.addr-end { margin-left: auto; display: flex; align-items: center; height: 100%; }
.addr-drop { width: 9px; height: 6px; margin-right: 11px; }
.addr-refresh { width: 30px; height: 100%; border-left: 1px solid #d9d9d9; display: flex; align-items: center; justify-content: center; }
.addr-refresh svg { width: 11px; height: 13px; }
.searchbox { width: 278px; margin-left: 12px; border: 1px solid #d9d9d9; border-width: 2px 1px; display: flex; align-items: center; gap: 10px; padding-left: 14px; color: #666; }
.searchbox-ico { width: 14px; height: 14px; color: #888; }

.explorer-body { flex: 1; display: flex; min-height: 0; }
.navpane { width: 158px; border-right: 1px solid #f0f0f0; padding-top: 17px; overflow: hidden; }
.nav-row { height: 24px; display: flex; align-items: center; color: #1c2a44; white-space: nowrap; overflow: hidden; position: relative; width: 156px; }
.nav-row > svg:first-child { width: 16px; height: 16px; margin-right: 5px; }
.nav-row.l1 { padding-left: 24px; }
.nav-row.l2 { padding-left: 32px; }
.nav-row.l3 { padding-left: 40px; }
.nav-row.section { margin-top: 8px; }
.nav-row.selected { background: #d9d9d9; }
.pinned { width: 13px; height: 13px; margin-left: auto; margin-right: 2px; }

.filepane { flex: 1; padding-left: 16px; }
.file-head { height: 25px; margin-top: 1px; display: grid; grid-template-columns: 258px 144px 120px 79px; color: #5a6a78; line-height: 25px; position: relative; }
.file-head span { padding-left: 3px; border-right: 1px solid #e5e5e5; }
.file-head .col-name { position: relative; }
.sort { position: absolute; left: 124px; top: 1px; width: 9px; height: 6px; }
.file-head { margin-bottom: 7px; }
.file-row { height: 21px; width: 597px; display: grid; grid-template-columns: 258px 144px 120px 75px; align-items: center; color: #777; white-space: nowrap; }
.file-row > span { padding-left: 6px; }
.file-row .col-name { display: flex; align-items: center; padding-left: 3px; color: #222; }
.file-row .col-name svg { width: 16px; height: 16px; margin-right: 5px; }
.file-row .col-name b { font-weight: 400; }
.file-row .size { text-align: right; padding-right: 4px; }
.file-row.selected { background: #d9d9d9; height: 22px; }

.statusbar { height: 22px; display: flex; align-items: center; color: #3a4560; margin-bottom: 0; }
.st-items { width: 63px; padding-left: 14px; border-right: 1px solid #e8e8e8; line-height: 16px; }
.st-sel { padding-left: 10px; width: 95px; }
.st-size { width: 48px; border-right: 1px solid #e8e8e8; line-height: 16px; }
.views { margin-left: auto; display: flex; gap: 6px; padding-right: 11px; margin-top: -6px; }
.views svg { width: 16px; height: 16px; }

/* bottom taskbar */
.taskbar { position: absolute; left: 0; top: 1056px; width: 1920px; height: 30px; background: linear-gradient(90deg, #2c2822, #1d1e22 40%, #202024); display: flex; align-items: center; color: #fff; }
.task-start { width: 36px; display: flex; justify-content: center; }
.task-start svg { width: 16px; height: 16px; }
.task-search { width: 36px; display: flex; justify-content: center; color: #fff; }
.task-lens { width: 17px; height: 17px; }
.task-app { width: 37px; height: 30px; display: flex; align-items: center; justify-content: center; position: relative; }
.task-app.first { margin-left: 2.500px; }
.task-app svg { width: 16px; height: 16px; }
.task-app::after { content: ""; position: absolute; left: 4px; right: 5px; bottom: 0; height: 2px; background: #aaa; }
.task-time { margin-left: auto; margin-right: 13px; font-size: 12px; }

/* browser */
.browser { position: absolute; left: 1920px; top: 0; width: 1856px; height: 1080px; display: flex; flex-direction: column; overflow: hidden; }
.chrome-tabs { height: 34px; background: #ffa9b9; display: flex; padding-left: 9px; align-items: stretch; flex: none; }
.ctab { width: 177px; display: flex; align-items: center; position: relative; padding-left: 11px; color: #555; letter-spacing: -.2px; }
.ctab.sep::after { content: ""; position: absolute; right: 0; top: 8px; height: 19px; width: 1px; background: #c9878f; }
.fav { width: 16px; height: 16px; margin-right: 8px; }
.ctab-title { width: 112px; overflow: hidden; white-space: nowrap; -webkit-mask-image: linear-gradient(90deg, #000 85%, transparent); mask-image: linear-gradient(90deg, #000 85%, transparent); }
.ctab-x { margin-left: auto; margin-right: 10px; font-size: 11px; color: #333; }
.ctab.active { background: #ffdfe5; border-radius: 8px 8px 0 0; margin-left: -2px; padding-left: 12px; color: #333; }
.ctab.active .ctab-x { margin-right: 11px; }
.chrome-bar { height: 36px; background: #ffdfe5; display: flex; align-items: center; padding-left: 14px; gap: 17px; flex: none; border-bottom: 1px solid #999; }
.nav-ico { width: 16px; height: 16px; }
.omnibox { width: 1000px; height: 28px; border-radius: 14px; background: #e3c7cc; display: flex; align-items: center; padding-left: 13px; margin-left: -3px; }
.lock { width: 9px; height: 11px; margin-right: 12px; }
.url { font-size: 14px; color: #222; letter-spacing: -.1px; white-space: nowrap; }
.url em { font-style: normal; color: #666; }

.webpage { flex: 1; background: #7d7e7f; position: relative; overflow: hidden; min-height: 0; }
.site-head { height: 63px; background: #808080; box-shadow: 0 1px 4px rgba(0,0,0,.15); padding: 12px 0 0 365px; }
.logo { display: flex; align-items: flex-end; width: 130px; height: 38px; }
.logo-text { display: flex; flex-direction: column; color: #155f8c; font-style: italic; margin-bottom: 4px; }
.logo-text small { font-size: 7px; line-height: 9px; font-style: normal; color: #333; margin-bottom: 2px; }
.logo-text strong { font-size: 14px; line-height: 17px; font-weight: 900; white-space: nowrap; width: 98px; }
.dolphin { width: 24px; height: 38px; }

.content { width: 693px; margin-left: 573px; }
.page-title { font-size: 24px; line-height: 36px; font-weight: 500; color: #050505; margin: 55px 0 26px; }
.card { border: 1px solid #717171; border-radius: 5px; background: #7f7f7f; margin-bottom: 37px; }
.card-plan { margin-bottom: 36px; }
.card-head { height: 46px; padding-left: 20px; font-size: 18px; font-weight: 500; line-height: 45px; color: #111; background: #7b7b7b; border-bottom: 1px solid #6e6e6e; border-radius: 5px 5px 0 0; }
.card-plan .card-body { height: 467px; padding: 16px 20px 0; }
.card-date .card-body { height: 112px; padding: 18px 20px 0; }
.plan-label { font-size: 13px; line-height: 18px; color: #333; }
.plan-name { font-size: 18px; line-height: 20px; font-weight: 700; color: #12587f; }
.plan-price { margin-top: 16px; height: 36px; line-height: 30px; font-size: 14px; color: #333; }
.plan-price b { font-size: 20px; color: #a00000; font-weight: 700; }
.info-row { width: 260px; height: 38px; border-bottom: 1px solid #6e6e6e; line-height: 37px; font-size: 14px; color: #333; white-space: nowrap; }
.info-row b { color: #111; font-weight: 500; }
.info-row.last { border-bottom: 0; }
.card-plan .info-row:nth-of-type(4) { border-top: 1px solid #6e6e6e; height: 39px; }

.modal { position: absolute; left: 671px; top: 357px; width: 498px; height: 297px; background: #fff; border-radius: 5px; display: flex; flex-direction: column; align-items: center; padding-top: 37px; }
.modal-ico { width: 76px; height: 76px; }
.modal-text { margin: 32px 0 23px; font-size: 18px; line-height: 34px; font-weight: 300; color: #555; white-space: nowrap; }
.modal-btn { width: 260px; height: 45px; border-radius: 23px; background: #198fe1; color: #fff; font-size: 18px; font-weight: 700; line-height: 44px; text-align: center; }

/* debug bar */
.debugbar { height: 33px; flex: none; background: #f5f5f5; border-top: 3px solid #f4645f; display: flex; align-items: stretch; font-size: 14px; color: #555; line-height: 30px; white-space: nowrap; letter-spacing: -.25px; }
.db-logo { width: 39px; border-right: 1px solid #ddd; display: flex; align-items: center; justify-content: center; }
.db-logo svg { width: 16px; height: 20px; }
.db-item { padding: 0 8px; border-right: 1px solid #ddd; display: flex; align-items: center; }
.db-item.no-line { border-right: 0; }
.db-badge { font-style: normal; font-size: 11px; line-height: 22px; min-width: 22px; height: 22px; padding: 0 7px; border-radius: 11px; background: #f4645f; color: #fff; text-align: center; margin-left: 6px; letter-spacing: 0; }
.db-right { margin-left: auto; display: flex; align-items: stretch; letter-spacing: -.05px; }
.db-meta { display: flex; align-items: center; gap: 5px; padding: 0 6px; border-right: 1px solid #ddd; }
.db-meta svg { width: 14px; height: 14px; }
.db-tools { display: flex; align-items: center; gap: 18px; padding: 0 7px; }
.db-tools svg { width: 15px; height: 13px; }

/* search panel */
.search-panel { position: absolute; left: 2992px; top: 0; width: 784px; height: 640px; background: #2d2d2d; display: flex; flex-direction: column; color: #eee; }
.sp-tabs { height: 52px; background: #212121; display: flex; align-items: center; padding-left: 25px; gap: 26px; position: relative; font-size: 14px; color: #bbb; letter-spacing: -.4px; }
.sp-tab.on { color: #fff; font-weight: 600; }
.sp-tab.on::after { content: ""; position: absolute; left: 13px; bottom: 1px; width: 40px; height: 4px; background: #777; }
.tri { display: inline-block; width: 0; height: 0; border: 5px solid transparent; border-top: 7px solid #ccc; border-bottom: 0; margin-left: 3px; }
.sp-tools { margin-left: auto; display: flex; align-items: center; gap: 24px; padding-right: 24px; }
.sp-tools svg { width: 18px; height: 26px; }
.sp-dots { font-size: 16px; font-weight: 700; letter-spacing: 0; }
.sp-body { flex: 1; padding: 24px 24px 0; position: relative; }
.sp-head { margin: 0; font-size: 14px; line-height: 18px; font-weight: 600; color: #eee; }
.sp-tiles { display: flex; gap: 8px; margin-top: 10px; }
.tile { flex: 1; height: 92px; background: #3e3e3e; border-radius: 3px; display: flex; flex-direction: column; align-items: center; padding-top: 14px; font-size: 14.500px; color: #eee; }
.tile-ico { width: 30px; height: 32px; margin-bottom: 9px; }
.sp-cols { display: flex; gap: 24px; margin-top: 24px; }
.sp-col { width: 356px; }
.sp-row { height: 64px; display: flex; align-items: center; padding-left: 16px; border-bottom: 1px solid #555; font-size: 14.500px; color: #eee; }
.sp-col .sp-head + .sp-row { margin-top: 8px; height: 64px; }
.sp-row.last { border-bottom: 0; }
.sp-ico { width: 32px; height: 32px; margin-right: 12px; }
.sp-row.qs { padding-left: 16px; }
.lens-btn { position: absolute; left: 704px; top: 488px; width: 40px; height: 40px; border-radius: 50%; background: #3e3e3e; display: flex; align-items: center; justify-content: center; }
.lens-btn svg { width: 18px; height: 18px; }
.lens-info { position: absolute; left: 741px; top: 484px; width: 16px; height: 24px; }
.sp-input { height: 40px; background: #fff; border: 2px solid #555; border-top-width: 2px; display: flex; align-items: center; padding-left: 13px; color: #555; font-size: 14.500px; flex: none; }
.sp-input-ico { width: 16px; height: 18px; color: #444; margin-right: 11px; }
.sp-caret { width: 1px; height: 20px; background: #222; margin-right: 1px; }

/* right taskbar */
.sidebar { position: absolute; left: 3776px; top: 0; width: 64px; height: 1086px; background: linear-gradient(180deg, #2c2725, #2e2322 50%, #1d1e21 85%); display: flex; flex-direction: column; align-items: center; color: #fff; }
.side-start { height: 30px; display: flex; align-items: center; }
.side-start svg { width: 16px; height: 16px; }
.side-search { height: 30px; width: 64px; background: #454342; display: flex; align-items: center; justify-content: center; color: #fff; }
.side-search svg { width: 17px; height: 17px; }
.side-app { height: 31px; width: 64px; display: flex; align-items: center; justify-content: center; position: relative; }
.side-app svg { width: 16px; height: 16px; }
.side-app::after { content: ""; position: absolute; right: 0; top: 4px; bottom: 4px; width: 2px; background: #aaa; }
.tray { margin-top: auto; width: 64px; display: flex; flex-direction: column; align-items: center; font-size: 12px; color: #eee; padding-top: 4px; height: 200px; letter-spacing: -.2px; }
.tray-caret { width: 11px; height: 7px; margin-bottom: 13px; }
.tray-ico { display: flex; gap: 8px; }
.tray-ico svg { width: 15px; height: 15px; }
.tray-lang { margin-top: 11px; line-height: 18px; }
.tray-time { margin-top: 20px; line-height: 18px; }
.tray-date { line-height: 17px; font-size: 12px; white-space: nowrap; }
.tray-note { width: 16px; height: 17px; margin-top: 18px; }
.tray-line { width: 64px; height: 1px; background: #777; margin-top: 15px; }
```
